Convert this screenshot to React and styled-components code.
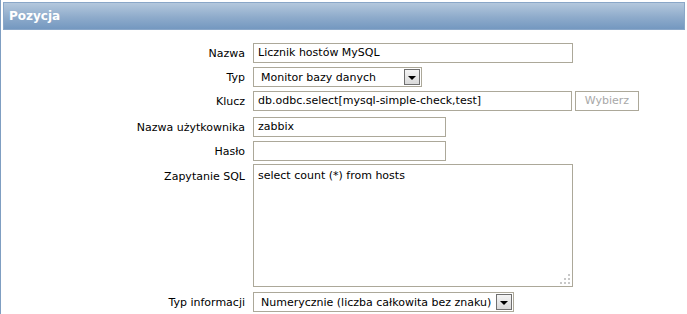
import React from 'react';
import styled, { createGlobalStyle } from 'styled-components';

const GlobalStyle = createGlobalStyle`
  html, body {
    margin: 0;
    padding: 0;
    background: #fff;
  }
  body {
    font-family: "DejaVu Sans", Verdana, sans-serif;
    font-size: 11px;
    color: #000;
  }
`;

const Frame = styled.div`
  width: 684px;
  height: 312px;
  border: 1px solid #7f9ec2;
  border-top: none;
  border-bottom: none;
  padding: 2px 1px 0 1px;
  box-sizing: content-box;
  overflow: hidden;
`;

const Header = styled.div`
  height: 26px;
  margin: 0 1px;
  border: 1px solid #8aa7c8;
  background: linear-gradient(to bottom, #b4c8dd 0%, #8eabcb 55%, #7498c0 100%);
  color: #fff;
  font-weight: bold;
  font-size: 12px;
  line-height: 26px;
  padding-left: 5px;
`;

const Form = styled.div`
  display: grid;
  grid-template-columns: 243px 1fr;
  column-gap: 8px;
  padding-top: 13px;
`;

const Label = styled.div`
  text-align: right;
  padding-top: ${({ $top }) => $top || 4}px;
  margin-bottom: ${({ $gap }) => $gap ?? 4}px;
  white-space: nowrap;
`;

const Field = styled.div`
  display: flex;
  gap: 3px;
  margin-bottom: ${({ $gap }) => $gap ?? 4}px;
`;

const TextInput = styled.div`
  box-sizing: border-box;
  width: ${({ $w }) => $w}px;
  height: 20px;
  border: 1px solid #aca899;
  padding: 0 4px;
  line-height: 18px;
  white-space: nowrap;
  overflow: hidden;
`;

const Select = styled.div`
  box-sizing: border-box;
  width: ${({ $w }) => $w}px;
  height: 20px;
  border: 1px solid #aca899;
  display: flex;
  align-items: center;
  padding: 0 1px 0 7px;
`;

const SelectText = styled.span`
  flex: 1;
  white-space: nowrap;
`;

const Arrow = styled.span`
  box-sizing: border-box;
  width: 16px;
  height: 16px;
  border: 1px solid #6f6f6f;
  background: linear-gradient(to bottom, #f4f4f4, #d9d9d9);
  display: flex;
  align-items: center;
  justify-content: center;

  &::after {
    content: '';
    border-left: 4px solid transparent;
    border-right: 4px solid transparent;
    border-top: 4px solid #000;
    margin-top: 1px;
  }
`;

const Button = styled.div`
  box-sizing: border-box;
  width: 64px;
  height: 20px;
  border: 1px solid #aca899;
  color: #a8a8a8;
  text-align: center;
  line-height: 18px;
`;

const TextArea = styled.div`
  position: relative;
  box-sizing: border-box;
  width: 320px;
  height: 123px;
  border: 1px solid #aca899;
  padding: 4px 4px;
  line-height: 14px;
`;

const Grip = styled.span`
  position: absolute;
  right: 2px;
  bottom: 2px;
  width: 10px;
  height: 10px;
  background:
    radial-gradient(circle, #c8c8c8 1px, transparent 1.2px) 8px 0 / 2px 2px no-repeat,
    radial-gradient(circle, #c8c8c8 1px, transparent 1.2px) 4px 4px / 2px 2px no-repeat,
    radial-gradient(circle, #c8c8c8 1px, transparent 1.2px) 8px 4px / 2px 2px no-repeat,
    radial-gradient(circle, #c8c8c8 1px, transparent 1.2px) 0 8px / 2px 2px no-repeat,
    radial-gradient(circle, #c8c8c8 1px, transparent 1.2px) 4px 8px / 2px 2px no-repeat,
    radial-gradient(circle, #c8c8c8 1px, transparent 1.2px) 8px 8px / 2px 2px no-repeat;
`;

export default function App() {
  return (
    <>
      <GlobalStyle />
      <Frame>
        <Header>Pozycja</Header>
        <Form>
          <Label>Nazwa</Label>
          <Field>
            <TextInput $w={320}>Licznik hostów MySQL</TextInput>
          </Field>

          <Label>Typ</Label>
          <Field>
            <Select $w={169}>
              <SelectText>Monitor bazy danych</SelectText>
              <Arrow />
            </Select>
          </Field>

          <Label $gap={6}>Klucz</Label>
          <Field $gap={6}>
            <TextInput $w={319}>db.odbc.select[mysql-simple-check,test]</TextInput>
            <Button>Wybierz</Button>
          </Field>

          <Label>Nazwa użytkownika</Label>
          <Field>
            <TextInput $w={193}>zabbix</TextInput>
          </Field>

          <Label $gap={3}>Hasło</Label>
          <Field $gap={3}>
            <TextInput $w={193} />
          </Field>

          <Label $top={6} $gap={5}>Zapytanie SQL</Label>
          <Field $gap={5}>
            <TextArea>
              select count (*) from hosts
              <Grip />
            </TextArea>
          </Field>

          <Label>Typ informacji</Label>
          <Field>
            <Select $w={261}>
              <SelectText>Numerycznie (liczba całkowita bez znaku)</SelectText>
              <Arrow />
            </Select>
          </Field>
        </Form>
      </Frame>
    </>
  );
}
